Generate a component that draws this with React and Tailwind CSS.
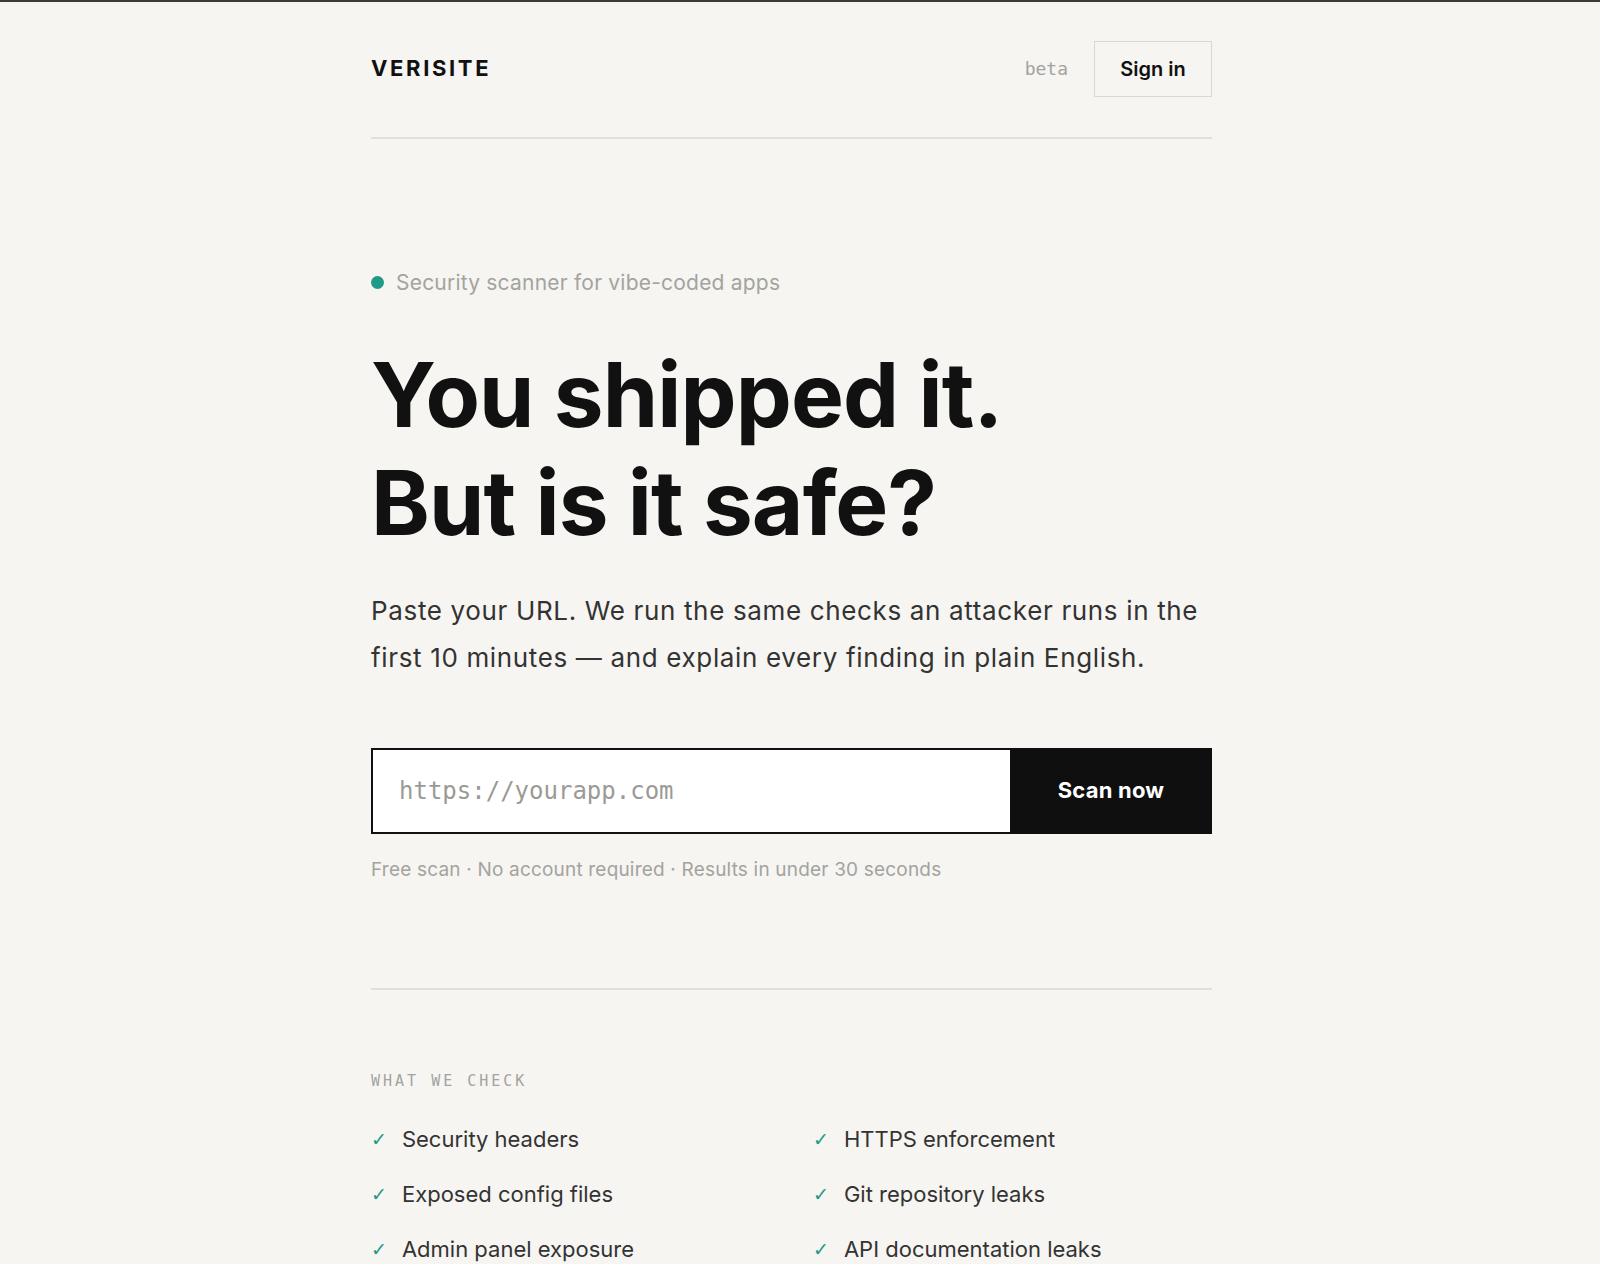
import { useState } from "react";

const checks = [
  "Security headers",
  "HTTPS enforcement",
  "Exposed config files",
  "Git repository leaks",
  "Admin panel exposure",
  "API documentation leaks",
  "Open directory listings",
  "Cookie security flags",
];

export default function App() {
  const [url, setUrl] = useState("");

  return (
    <div className="h-screen overflow-hidden bg-[#f6f5f1] font-['Inter',sans-serif] text-[#111]">
      {/* top bar */}
      <div className="h-[2px] bg-[#3a3a36]" />

      <div className="w-[1583px]">
        <div className="max-w-[841px] mx-auto">
          {/* HEADER */}
          <header className="flex items-center justify-between pt-[39px] pb-[40px] border-b-2 border-[#e0dfdb]">
            <div className="text-[22px] leading-[26px] -mt-[3px] font-bold tracking-[0.12em] text-[#111]">VERISITE</div>
            <div className="flex items-center gap-[26px]">
              <span className="font-['DejaVu_Sans_Mono',monospace] text-[18px] text-[#a3a3a0] -mt-[2px]">beta</span>
              <button className="h-[56px] w-[118px] border border-[#d8d8d4] text-[20px] font-semibold text-[#111]">
                Sign in
              </button>
            </div>
          </header>

          {/* HERO */}
          <section className="pt-[128px]">
            <div className="flex items-center gap-[12px]">
              <span className="w-[13px] h-[13px] rounded-full bg-[#1f9a86]" />
              <span className="text-[21px] tracking-[0.01em] text-[#a3a3a0]">Security scanner for vibe-coded apps</span>
            </div>

            <h1 className="mt-[42px] text-[89px] leading-[108px] font-bold tracking-[-0.01em] text-[#111]">
              You shipped it.
              <br />
              But is it safe?
            </h1>

            <p className="mt-[30px] text-[26px] leading-[47px] text-[#333] tracking-[0.025em]">
              Paste your URL. We run the same checks an attacker runs in the first 10 minutes — and explain every finding in plain English.
            </p>

            <form
              className="mt-[67px] flex h-[86px]"
              onSubmit={(e) => e.preventDefault()}
            >
              <input
                value={url}
                onChange={(e) => setUrl(e.target.value)}
                placeholder="https://yourapp.com"
                className="flex-1 min-w-0 bg-white border-2 border-r-0 border-[#111] px-[26px] font-['DejaVu_Sans_Mono',monospace] text-[24px] text-[#111] placeholder:text-[#9a9a96] outline-none"
              />
              <button
                type="submit"
                className="w-[202px] bg-[#0f0f0f] text-white text-[22px] tracking-[0.01em] font-bold"
              >
                Scan now
              </button>
            </form>

            <p className="mt-[22px] text-[19px] tracking-[0.01em] text-[#a3a3a0]">
              Free scan · No account required · Results in under 30 seconds
            </p>
          </section>

          {/* WHAT WE CHECK */}
          <section className="mt-[104px] border-t-2 border-[#e0dfdb] pt-[80px]">
            <div className="font-['DejaVu_Sans_Mono',monospace] text-[15px] tracking-[0.2em] text-[#a3a3a0]">
              WHAT WE CHECK
            </div>
            <ul className="mt-[32px] grid grid-cols-2 gap-x-[43px] gap-y-[27px]">
              {checks.map((c) => (
                <li key={c} className="flex items-center gap-[15px] text-[22px] leading-[28px] text-[#333]">
                  <span className="font-['DejaVu_Sans',sans-serif] text-[#1f9a86] text-[19px]">✓</span>
                  {c}
                </li>
              ))}
            </ul>
          </section>
        </div>
      </div>
    </div>
  );
}
